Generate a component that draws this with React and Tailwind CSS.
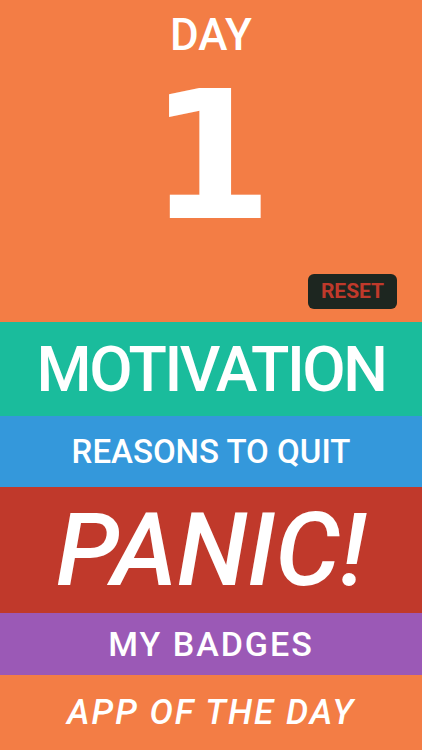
export default function App() {
  const font = { fontFamily: 'Roboto, "Liberation Sans", sans-serif' };
  return (
    <div className="w-[422px] h-[750px] flex flex-col overflow-hidden text-white" style={font}>
      {/* Day counter */}
      <div className="h-[322px] bg-[#f37d45] flex flex-col items-center">
        <div className="mt-[17px] text-[44px] leading-[36px] font-medium">DAY</div>
        <div
          className="text-[178px] leading-[207px] font-bold"
          style={{ fontFamily: '"DejaVu Sans", sans-serif' }}
        >
          1
        </div>
        <div className="mt-auto mb-[13px] self-end mr-[25px]">
          <button className="w-[89px] h-[35px] rounded-[6px] bg-[#1d2620] text-[#c0392b] text-[21px] font-bold flex items-center justify-center">
            RESET
          </button>
        </div>
      </div>

      <div className="h-[94px] bg-[#1abc9c] flex items-center justify-center">
        <span className="text-[63px] leading-none font-medium tracking-[-2.5px]">MOTIVATION</span>
      </div>

      <div className="h-[71px] bg-[#3498db] flex items-center justify-center">
        <span className="text-[33px] leading-none font-medium">REASONS TO QUIT</span>
      </div>

      <div className="h-[126px] bg-[#c0392b] flex items-center justify-center">
        <span className="text-[102px] leading-none italic font-medium">PANIC!</span>
      </div>

      <div className="h-[62px] bg-[#9b59b6] flex items-center justify-center">
        <span className="text-[34px] leading-none font-medium tracking-[2px]">MY BADGES</span>
      </div>

      <div className="flex-1 bg-[#f37d45] flex items-center justify-center">
        <span className="text-[35px] leading-none italic font-medium tracking-[2px]">APP OF THE DAY</span>
      </div>
    </div>
  );
}
